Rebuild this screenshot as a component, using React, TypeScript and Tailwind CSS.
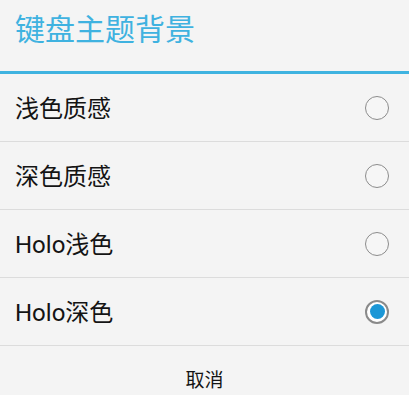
import React from "react";

const items = [
  { label: "浅色质感", checked: false },
  { label: "深色质感", checked: false },
  { label: "Holo浅色", checked: false },
  { label: "Holo深色", checked: true },
];

function Radio({ checked }: { checked: boolean }) {
  return (
    <div
      className={
        checked
          ? "w-[24px] h-[24px] rounded-full border-[2px] border-[#8a8a8a] bg-white flex items-center justify-center"
          : "w-[24px] h-[24px] rounded-full border-[1.5px] border-[#8c8c8c] bg-[#f6f6f6] flex items-center justify-center"
      }
    >
      {checked && <div className="w-[15px] h-[15px] rounded-full bg-[#1c97d6]" />}
    </div>
  );
}

export default function App() {
  return (
    <div
      className="w-[411px] h-[397px] bg-white overflow-hidden"
      style={{ fontFamily: '"Roboto", "Noto Sans CJK SC", sans-serif' }}
    >
      <div className="w-[409px] h-[395px] bg-[#f4f4f4] flex flex-col">
        <div className="h-[71px] flex items-center pl-[15px] pb-[11px]">
          <span className="text-[30px] leading-none text-[#3fb2e0]">键盘主题背景</span>
        </div>
        <div className="h-[3px] bg-[#3fb3e0]" />
        {items.map((it) => (
          <div
            key={it.label}
            className="h-[68px] flex items-center justify-between pl-[15px] pr-[20px] pt-[3px] border-b border-[#dcdcdc]"
          >
            <span className="text-[24px] leading-none text-[#141414]">{it.label}</span>
            <div className="-mt-[3px]">
              <Radio checked={it.checked} />
            </div>
          </div>
        ))}
        <div className="flex-1 flex justify-center pt-[25px]">
          <span className="text-[19px] leading-none text-[#141414]">取消</span>
        </div>
      </div>
    </div>
  );
}
